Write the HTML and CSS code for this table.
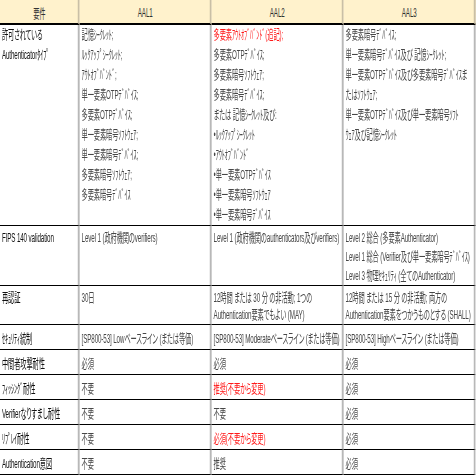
FILE: index.html
```html
<!DOCTYPE html>
<html lang="ja">
<head>
<meta charset="utf-8">
<title>AAL要件</title>
<link rel="stylesheet" href="styles.css">
</head>
<body>
<div class="sheet">
  <div class="c hd first">要件</div>
  <div class="c hd">AAL1</div>
  <div class="c hd">AAL2</div>
  <div class="c hd">AAL3</div>

  <div class="c types first">許可されている<br>Authenticatorﾀｲﾌﾟ</div>
  <div class="c types">記憶ｼｰｸﾚｯﾄ;<br>ﾙｯｸｱｯﾌﾟｼｰｸﾚｯﾄ;<br>ｱｳﾄｵﾌﾞﾊﾞﾝﾄﾞ;<br>単一要素OTPﾃﾞﾊﾞｲｽ;<br>多要素OTPﾃﾞﾊﾞｲｽ;<br>単一要素暗号ｿﾌﾄｳｪｱ;<br>単一要素暗号ﾃﾞﾊﾞｲｽ;<br>多要素暗号ｿﾌﾄｳｪｱ;<br>多要素暗号ﾃﾞﾊﾞｲｽ</div>
  <div class="c types"><span class="red">多要素ｱｳﾄｵﾌﾞﾊﾞﾝﾄﾞ(追記);</span><br>多要素OTPﾃﾞﾊﾞｲｽ;<br>多要素暗号ｿﾌﾄｳｪｱ;<br>多要素暗号ﾃﾞﾊﾞｲｽ;<br>または 記憶ｼｰｸﾚｯﾄ及び:<br>•ﾙｯｸｱｯﾌﾟｼｰｸﾚｯﾄ<br>•ｱｳﾄｵﾌﾞﾊﾞﾝﾄﾞ<br>•単一要素OTPﾃﾞﾊﾞｲｽ<br>•単一要素暗号ｿﾌﾄｳｪｱ<br>•単一要素暗号ﾃﾞﾊﾞｲｽ</div>
  <div class="c types">多要素暗号ﾃﾞﾊﾞｲｽ;<br>単一要素暗号ﾃﾞﾊﾞｲｽ及び 記憶ｼｰｸﾚｯﾄ;<br>単一要素OTPﾃﾞﾊﾞｲｽ及び多要素暗号ﾃﾞﾊﾞｲｽま<br>たはｿﾌﾄｳｪｱ;<br>単一要素OTPﾃﾞﾊﾞｲｽ及び単一要素暗号ｿﾌﾄ<br>ｳｪｱ及び記憶ｼｰｸﾚｯﾄ</div>

  <div class="c fips first">FIPS 140 validation</div>
  <div class="c fips">Level 1 (政府機関のverifiers)</div>
  <div class="c fips">Level 1 (政府機関のauthenticators及びverifiers)</div>
  <div class="c fips">Level 2 総合 (多要素Authenticator)<br>Level 1 総合 (Verifier及び単一要素暗号ﾃﾞﾊﾞｲｽ)<br>Level 3 物理ｾｷｭﾘﾃｨ (全てのAuthenticator)</div>

  <div class="c reauth first">再認証</div>
  <div class="c reauth">30日</div>
  <div class="c reauth">12時間 または 30 分 の非活動; 1つの<br>Authentication要素でもよい (MAY)</div>
  <div class="c reauth">12時間 または 15 分 の非活動; 両方の<br>Authentication要素をつかうものとする (SHALL)</div>

  <div class="c one first">ｾｷｭﾘﾃｨ統制</div>
  <div class="c one">[SP800-53] Lowベースライン (または等価)</div>
  <div class="c one">[SP800-53] Moderateベースライン (または等価)</div>
  <div class="c one">[SP800-53] Highベースライン (または等価)</div>

  <div class="c one first">中間者攻撃耐性</div>
  <div class="c one">必須</div>
  <div class="c one">必須</div>
  <div class="c one">必須</div>

  <div class="c one first">ﾌｨｯｼﾝｸﾞ耐性</div>
  <div class="c one">不要</div>
  <div class="c one"><span class="red">推奨(不要から変更)</span></div>
  <div class="c one">必須</div>

  <div class="c one first">Verifierなりすまし耐性</div>
  <div class="c one">不要</div>
  <div class="c one">不要</div>
  <div class="c one">必須</div>

  <div class="c one first">ﾘﾌﾟﾚｲ耐性</div>
  <div class="c one">不要</div>
  <div class="c one"><span class="red">必須(不要から変更)</span></div>
  <div class="c one">必須</div>

  <div class="c one first">Authentication意図</div>
  <div class="c one">不要</div>
  <div class="c one">推奨</div>
  <div class="c one">必須</div>
</div>
</body>
</html>
```

FILE: styles.css
```css
html, body {
  margin: 0;
  padding: 0;
  overflow: hidden;
  background: #ffffff;
}

.sheet {
  width: 991px;
  display: grid;
  grid-template-columns: 166px 275px 275px 275px;
  transform: scaleX(0.48);
  transform-origin: 0 0;
  font-family: "Liberation Sans", "Noto Sans CJK JP", sans-serif;
  font-size: 13px;
  font-feature-settings: "palt" 1;
  letter-spacing: -0.25px;
  color: #474747;
}

.c {
  box-sizing: border-box;
  border-right: 4px solid #b8b8b8;
  border-bottom: 1px solid #000000;
  padding: 0 2px 0 4px;
  white-space: nowrap;
  overflow: hidden;
}

.first {
  color: #111111;
  padding-left: 4px;
}

.hd {
  height: 25px;
  background: #fff2cc;
  border-bottom: 2px solid #000000;
  border-right-color: #c9bfa6;
  padding-top: 2px;
  display: flex;
  align-items: center;
  justify-content: center;
  color: #333333;
}

.types {
  line-height: 20px;
  padding-top: 0;
}

.fips {
  line-height: 19px;
  padding-top: 2px;
}

.reauth {
  line-height: 17px;
  padding-top: 3px;
  padding-bottom: 1px;
}

.one {
  height: 25px;
  display: flex;
  align-items: center;
}

.red {
  color: #ff1a1a;
}
```
